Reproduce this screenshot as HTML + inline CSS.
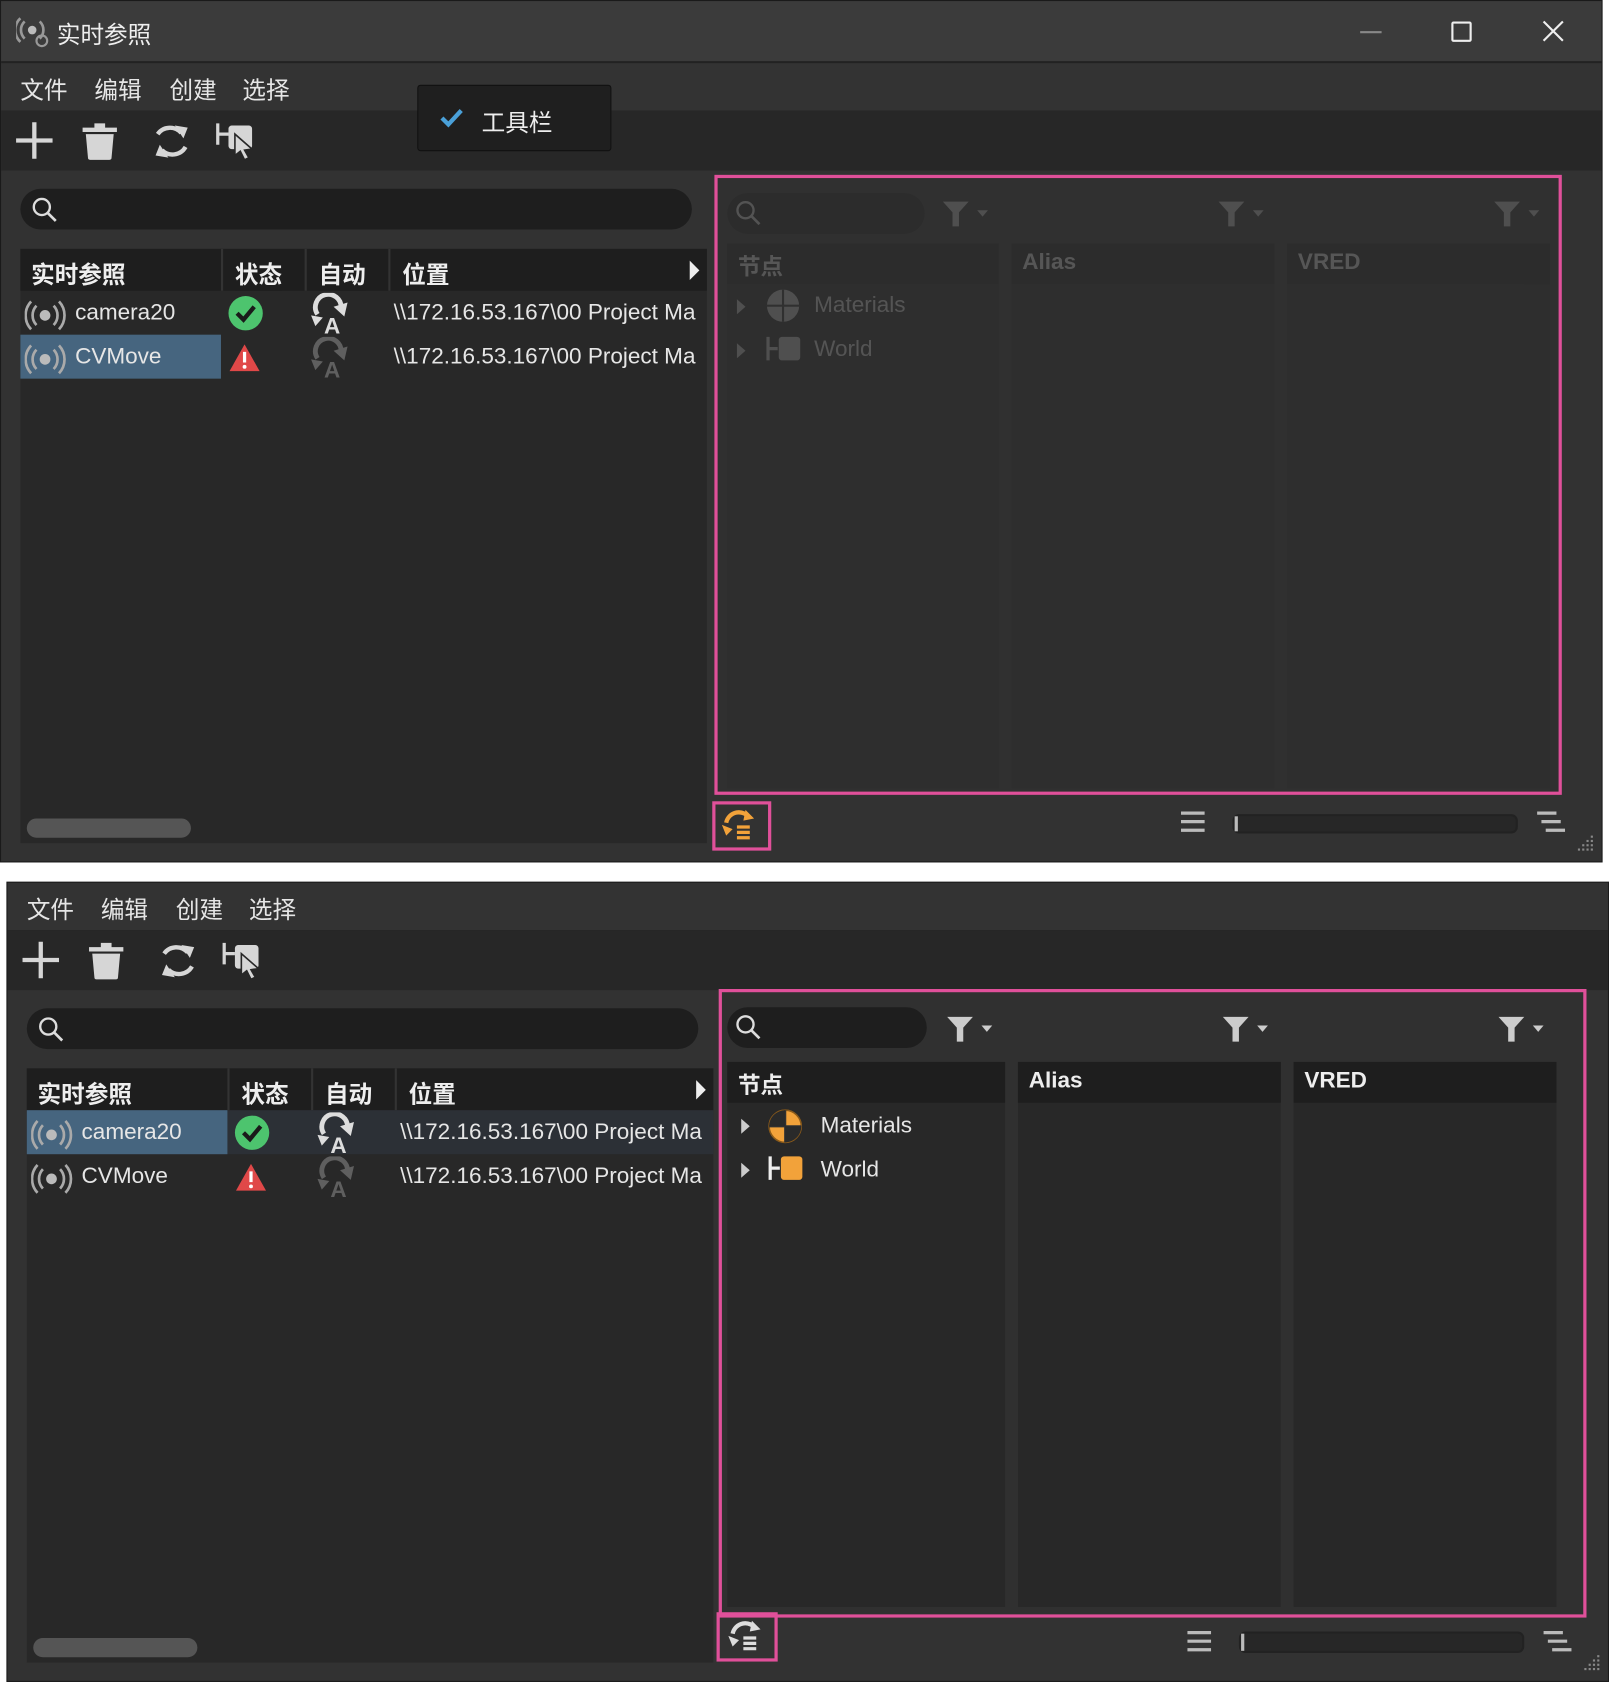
<!DOCTYPE html>
<html><head><meta charset="utf-8"><style>
*{box-sizing:border-box;margin:0;padding:0}
body{width:1609px;height:1684px;background:#fff;overflow:hidden;font-family:"Liberation Sans","Noto Sans CJK SC",sans-serif;color:#ddd}
#s{position:absolute;left:0;top:0;width:1500px;height:1570px;transform:scale(1.07267);transform-origin:0 0}
.a{position:absolute}
.win{position:absolute;background:#323232;border:1px solid #1a1a1a;overflow:hidden}
.menu{left:0;right:0;height:44px;background:#333;font-size:22px;color:#e6e6e6}
.menu span{position:absolute;top:8px}
.tb{left:0;right:0;height:56px;background:#272727}
.pill{background:#1e1e1e;border-radius:19px}
.tbl{background:#282828}
.hd{background:#1e1e1e;font-size:22px;font-weight:bold;color:#eee}
.row{font-size:21px;color:#e6e6e6}
.col{background:#282828}
.ch{background:#1e1e1e;font-size:21px;font-weight:bold;color:#eee;padding:6px 10px;height:38px}
.mag{border:3px solid #e0509a}
</style></head><body><div id="s">

<!-- TOP WINDOW -->
<div class="win" style="left:0;top:0;width:1494px;height:804px">
 <div class="a" style="left:0;top:0;right:0;height:58px;background:#3b3b3b;border-bottom:2px solid #222"></div>
 <svg class="a" style="left:14px;top:13px" width="34" height="32" viewBox="0 0 34 32"><circle cx="15" cy="14" r="4" fill="#bbb"/><path d="M8 6a11 11 0 0 0 0 16M22 6a11 11 0 0 1 0 16M4 3a15 15 0 0 0 0 22" stroke="#999" stroke-width="2.5" fill="none"/><circle cx="24" cy="24" r="5" stroke="#999" stroke-width="2" fill="none"/></svg>
 <div class="a" style="left:52px;top:14px;font-size:22px;color:#eee">实时参照</div>
 <div class="a" style="left:1267px;top:28px;width:20px;height:2px;background:#888"></div>
 <div class="a" style="left:1352px;top:19px;width:19px;height:19px;border:2px solid #eee;border-radius:2px"></div>
 <svg class="a" style="left:1436px;top:17px" width="22" height="22"><path d="M2 2L20 20M20 2L2 20" stroke="#eee" stroke-width="2"/></svg>
 <div class="a" style="top:58px;left:0;right:0;height:745px">
  <div class="a menu" style="top:0"><span style="left:18px">文件</span><span style="left:87px">编辑</span><span style="left:157px">创建</span><span style="left:225px">选择</span></div>
  <div class="a tb" style="top:44px"></div>
  <svg class="a" style="left:10px;top:52px" width="240" height="44" viewBox="0 0 240 44"><path d="M4 20H38M21 3V37" stroke="#d6d6d6" stroke-width="4"/><path d="M66 10H98" stroke="#d6d6d6" stroke-width="4"/><rect x="77" y="4" width="10" height="5" fill="#d6d6d6"/><path d="M69 14H95L93 36Q93 38 91 38H73Q71 38 71 36Z" fill="#d6d6d6"/><path d="M136 14A14 14 0 0 1 158 13M162 26A14 14 0 0 1 140 29" stroke="#d6d6d6" stroke-width="4" fill="none"/><path d="M152 6L164 8L160 18Z M146 36L134 34L138 24Z" fill="#d6d6d6"/><path d="M192 4V24M192 14H202" stroke="#d6d6d6" stroke-width="3"/><rect x="202" y="6" width="22" height="22" rx="3" fill="#d6d6d6"/><path d="M208 14L208 34L213 30L217 38L221 36L217 29L224 28Z" fill="#d6d6d6" stroke="#272727" stroke-width="1.5"/></svg>
  <div class="a pill" style="left:18px;top:117px;width:626px;height:38px"></div>
  <svg class="a" style="left:28px;top:124px" width="26" height="26"><circle cx="10" cy="10" r="7.5" stroke="#ddd" stroke-width="2.2" fill="none"/><path d="M15 15L23 23" stroke="#ddd" stroke-width="2.5"/></svg>
  <div class="a tbl" style="left:18px;top:173px;width:640px;height:554px"></div>
  <div class="a hd" style="left:18px;top:173px;width:640px;height:39px"></div>
  <div class="a" style="left:205px;top:173px;width:2px;height:39px;background:#333"></div>
  <div class="a" style="left:283px;top:173px;width:2px;height:39px;background:#333"></div>
  <div class="a" style="left:361px;top:173px;width:2px;height:39px;background:#333"></div>
  <div class="a hd" style="left:28px;top:180px">实时参照</div><div class="a hd" style="left:218px;top:180px">状态</div><div class="a hd" style="left:296px;top:180px">自动</div><div class="a hd" style="left:374px;top:180px">位置</div>
  <svg class="a" style="left:640px;top:183px" width="12" height="20"><path d="M2 1L11 10L2 19Z" fill="#eee"/></svg>
  <div class="a" style="left:18px;top:253px;width:187px;height:41px;background:#46657f"></div>
  <div class="a row" style="left:69px;top:221px">camera20</div><div class="a row" style="left:69px;top:262px">CVMove</div>
  <div class="a row" style="left:366px;top:221px;width:292px;overflow:hidden;white-space:nowrap">\\172.16.53.167\00 Project Ma</div>
  <div class="a row" style="left:366px;top:262px;width:292px;overflow:hidden;white-space:nowrap">\\172.16.53.167\00 Project Ma</div>
  <svg class="a" style="left:22px;top:219px" width="40" height="32"><circle cx="19" cy="16" r="5" fill="#bbb"/><path d="M11 7a13 13 0 0 0 0 18M27 7a13 13 0 0 1 0 18M6 3a19 19 0 0 0 0 26M32 3a19 19 0 0 1 0 26" stroke="#aaa" stroke-width="2.5" fill="none"/></svg>
  <svg class="a" style="left:22px;top:260px" width="40" height="32"><circle cx="19" cy="16" r="5" fill="#bbb"/><path d="M11 7a13 13 0 0 0 0 18M27 7a13 13 0 0 1 0 18M6 3a19 19 0 0 0 0 26M32 3a19 19 0 0 1 0 26" stroke="#aaa" stroke-width="2.5" fill="none"/></svg>
  <svg class="a" style="left:211px;top:216px" width="34" height="34"><circle cx="17" cy="17" r="16" fill="#4dc46e"/><path d="M9 17L15 23L25 11" stroke="#1a1a1a" stroke-width="4" fill="none"/></svg>
  <svg class="a" style="left:212px;top:260px" width="30" height="28"><path d="M15 2L29 27H1Z" fill="#e04848"/><path d="M15 9V19" stroke="#fff" stroke-width="3"/><circle cx="15" cy="23" r="1.8" fill="#fff"/></svg>
  <svg class="a" style="left:287px;top:214px" width="38" height="40"><path d="M8 20A12 12 0 1 1 30 14" stroke="#ddd" stroke-width="4.5" fill="none"/><path d="M23 13L36 9L33 22Z M2 21L13 23L6 31Z" fill="#ddd"/><text x="14" y="38" font-size="21" font-weight="bold" fill="#ddd" font-family="Liberation Sans">A</text></svg>
  <svg class="a" style="left:287px;top:255px;opacity:.3" width="38" height="40"><path d="M8 20A12 12 0 1 1 30 14" stroke="#ddd" stroke-width="4.5" fill="none"/><path d="M23 13L36 9L33 22Z M2 21L13 23L6 31Z" fill="#ddd"/><text x="14" y="38" font-size="21" font-weight="bold" fill="#ddd" font-family="Liberation Sans">A</text></svg>
  <div class="a" style="left:24px;top:704px;width:153px;height:18px;background:#555;border-radius:9px"></div>
  <!-- right panel -->
  <div class="a mag" style="left:665px;top:104px;width:790px;height:578px;background:#303030">
   <div class="a" style="left:0;top:0;right:0;bottom:0;opacity:.2">
    <div class="a pill" style="left:9px;top:14px;width:184px;height:38px"></div>
    <svg class="a" style="left:16px;top:20px" width="26" height="26"><circle cx="10" cy="10" r="7.5" stroke="#ddd" stroke-width="2.2" fill="none"/><path d="M15 15L23 23" stroke="#ddd" stroke-width="2.5"/></svg>
    <svg class="a" style="left:208px;top:20px" width="50" height="26"><path d="M2 2H26L17 12V25H11V12Z" fill="#ccc"/><path d="M34 10H44L39 16Z" fill="#ccc"/></svg>
    <svg class="a" style="left:465px;top:20px" width="50" height="26"><path d="M2 2H26L17 12V25H11V12Z" fill="#ccc"/><path d="M34 10H44L39 16Z" fill="#ccc"/></svg>
    <svg class="a" style="left:722px;top:20px" width="50" height="26"><path d="M2 2H26L17 12V25H11V12Z" fill="#ccc"/><path d="M34 10H44L39 16Z" fill="#ccc"/></svg>
    <div class="a col" style="left:9px;top:61px;width:253px;height:508px"><div class="ch">节点</div></div>
    <div class="a col" style="left:274px;top:61px;width:245px;height:508px"><div class="ch">Alias</div></div>
    <div class="a col" style="left:531px;top:61px;width:245px;height:508px"><div class="ch">VRED</div></div>
    <svg class="a" style="left:17px;top:112px" width="10" height="16"><path d="M1 1L9 8L1 15Z" fill="#ccc"/></svg>
    <svg class="a" style="left:17px;top:153px" width="10" height="16"><path d="M1 1L9 8L1 15Z" fill="#ccc"/></svg>
    <svg class="a" style="left:44px;top:102px" width="34" height="34"><circle cx="17" cy="17" r="15" fill="#ccc"/><path d="M17 2V32M2 17H32" stroke="#333" stroke-width="2"/></svg>
    <svg class="a" style="left:44px;top:146px" width="36" height="26"><path d="M3 2V24M3 13H12" stroke="#ccc" stroke-width="3"/><rect x="13" y="2" width="20" height="22" rx="3" fill="#ccc"/></svg>
    <div class="a row" style="left:90px;top:107px">Materials</div>
    <div class="a row" style="left:90px;top:148px">World</div>
   </div>
  </div>
  <div class="a mag" style="left:663px;top:688px;width:55px;height:46px"></div>
  <svg class="a" style="left:670px;top:692px" width="36" height="36"><path d="M6 16A12 12 0 0 1 28 12" stroke="#f2a23a" stroke-width="4" fill="none"/><path d="M24 4L32 12L22 14Z M2 18L12 22L6 28Z" fill="#f2a23a"/><path d="M16 20H28M16 25H28M16 30H28" stroke="#f2a23a" stroke-width="3"/></svg>
  <svg class="a" style="left:1098px;top:696px" width="26" height="22"><path d="M2 3H24M2 11H24M2 19H24" stroke="#bbb" stroke-width="3"/></svg>
  <div class="a" style="left:1148px;top:700px;width:266px;height:18px;background:#272727;border:2px solid #222;border-radius:6px"></div>
  <div class="a" style="left:1150px;top:702px;width:3px;height:14px;background:#bbb"></div>
  <svg class="a" style="left:1430px;top:696px" width="40" height="22"><path d="M2 3H20M6 11H24M10 19H28" stroke="#bbb" stroke-width="3"/></svg>
  <svg class="a" style="left:1466px;top:718px" width="22" height="22"><g fill="#888"><rect x="16" y="2" width="2" height="2"/><rect x="12" y="6" width="2" height="2"/><rect x="16" y="6" width="2" height="2"/><rect x="8" y="10" width="2" height="2"/><rect x="12" y="10" width="2" height="2"/><rect x="16" y="10" width="2" height="2"/><rect x="4" y="14" width="2" height="2"/><rect x="8" y="14" width="2" height="2"/><rect x="12" y="14" width="2" height="2"/><rect x="16" y="14" width="2" height="2"/></g></svg>
 </div>
 <!-- popup -->
 <div class="a" style="left:388px;top:78px;width:181px;height:62px;background:#1f1f1f;border:1px solid #111;border-radius:3px"></div>
 <svg class="a" style="left:408px;top:98px" width="24" height="22"><path d="M3 11L9 17L21 4" stroke="#4aa0d8" stroke-width="4" fill="none"/></svg>
 <div class="a" style="left:448px;top:96px;font-size:22px;color:#eee">工具栏</div>
</div>

<!-- BOTTOM WINDOW -->
<div class="win" style="left:6px;top:822px;width:1494px;height:746px">
  <div class="a menu" style="top:0"><span style="left:18px">文件</span><span style="left:87px">编辑</span><span style="left:157px">创建</span><span style="left:225px">选择</span></div>
  <div class="a tb" style="top:44px"></div>
  <svg class="a" style="left:10px;top:52px" width="240" height="44" viewBox="0 0 240 44"><path d="M4 20H38M21 3V37" stroke="#d6d6d6" stroke-width="4"/><path d="M66 10H98" stroke="#d6d6d6" stroke-width="4"/><rect x="77" y="4" width="10" height="5" fill="#d6d6d6"/><path d="M69 14H95L93 36Q93 38 91 38H73Q71 38 71 36Z" fill="#d6d6d6"/><path d="M136 14A14 14 0 0 1 158 13M162 26A14 14 0 0 1 140 29" stroke="#d6d6d6" stroke-width="4" fill="none"/><path d="M152 6L164 8L160 18Z M146 36L134 34L138 24Z" fill="#d6d6d6"/><path d="M192 4V24M192 14H202" stroke="#d6d6d6" stroke-width="3"/><rect x="202" y="6" width="22" height="22" rx="3" fill="#d6d6d6"/><path d="M208 14L208 34L213 30L217 38L221 36L217 29L224 28Z" fill="#d6d6d6" stroke="#272727" stroke-width="1.5"/></svg>
  <div class="a pill" style="left:18px;top:117px;width:626px;height:38px"></div>
  <svg class="a" style="left:28px;top:124px" width="26" height="26"><circle cx="10" cy="10" r="7.5" stroke="#ddd" stroke-width="2.2" fill="none"/><path d="M15 15L23 23" stroke="#ddd" stroke-width="2.5"/></svg>
  <div class="a tbl" style="left:18px;top:173px;width:640px;height:554px"></div>
  <div class="a hd" style="left:18px;top:173px;width:640px;height:39px"></div>
  <div class="a" style="left:205px;top:173px;width:2px;height:39px;background:#333"></div>
  <div class="a" style="left:283px;top:173px;width:2px;height:39px;background:#333"></div>
  <div class="a" style="left:361px;top:173px;width:2px;height:39px;background:#333"></div>
  <div class="a hd" style="left:28px;top:180px">实时参照</div><div class="a hd" style="left:218px;top:180px">状态</div><div class="a hd" style="left:296px;top:180px">自动</div><div class="a hd" style="left:374px;top:180px">位置</div>
  <svg class="a" style="left:640px;top:183px" width="12" height="20"><path d="M2 1L11 10L2 19Z" fill="#eee"/></svg>
  <div class="a" style="left:18px;top:212px;width:640px;height:41px;background:#2c3036"></div>
  <div class="a" style="left:18px;top:212px;width:187px;height:41px;background:#46657f"></div>
  <div class="a row" style="left:69px;top:221px">camera20</div><div class="a row" style="left:69px;top:262px">CVMove</div>
  <div class="a row" style="left:366px;top:221px;width:292px;overflow:hidden;white-space:nowrap">\\172.16.53.167\00 Project Ma</div>
  <div class="a row" style="left:366px;top:262px;width:292px;overflow:hidden;white-space:nowrap">\\172.16.53.167\00 Project Ma</div>
  <svg class="a" style="left:22px;top:219px" width="40" height="32"><circle cx="19" cy="16" r="5" fill="#bbb"/><path d="M11 7a13 13 0 0 0 0 18M27 7a13 13 0 0 1 0 18M6 3a19 19 0 0 0 0 26M32 3a19 19 0 0 1 0 26" stroke="#aaa" stroke-width="2.5" fill="none"/></svg>
  <svg class="a" style="left:22px;top:260px" width="40" height="32"><circle cx="19" cy="16" r="5" fill="#bbb"/><path d="M11 7a13 13 0 0 0 0 18M27 7a13 13 0 0 1 0 18M6 3a19 19 0 0 0 0 26M32 3a19 19 0 0 1 0 26" stroke="#aaa" stroke-width="2.5" fill="none"/></svg>
  <svg class="a" style="left:211px;top:216px" width="34" height="34"><circle cx="17" cy="17" r="16" fill="#4dc46e"/><path d="M9 17L15 23L25 11" stroke="#1a1a1a" stroke-width="4" fill="none"/></svg>
  <svg class="a" style="left:212px;top:260px" width="30" height="28"><path d="M15 2L29 27H1Z" fill="#e04848"/><path d="M15 9V19" stroke="#fff" stroke-width="3"/><circle cx="15" cy="23" r="1.8" fill="#fff"/></svg>
  <svg class="a" style="left:287px;top:214px" width="38" height="40"><path d="M8 20A12 12 0 1 1 30 14" stroke="#ddd" stroke-width="4.5" fill="none"/><path d="M23 13L36 9L33 22Z M2 21L13 23L6 31Z" fill="#ddd"/><text x="14" y="38" font-size="21" font-weight="bold" fill="#ddd" font-family="Liberation Sans">A</text></svg>
  <svg class="a" style="left:287px;top:255px;opacity:.3" width="38" height="40"><path d="M8 20A12 12 0 1 1 30 14" stroke="#ddd" stroke-width="4.5" fill="none"/><path d="M23 13L36 9L33 22Z M2 21L13 23L6 31Z" fill="#ddd"/><text x="14" y="38" font-size="21" font-weight="bold" fill="#ddd" font-family="Liberation Sans">A</text></svg>
  <div class="a" style="left:24px;top:704px;width:153px;height:18px;background:#555;border-radius:9px"></div>
  <div class="a mag" style="left:663px;top:99px;width:809px;height:586px;background:#303030">
    <div class="a pill" style="left:5px;top:14px;width:186px;height:38px"></div>
    <svg class="a" style="left:12px;top:20px" width="26" height="26"><circle cx="10" cy="10" r="7.5" stroke="#ddd" stroke-width="2.2" fill="none"/><path d="M15 15L23 23" stroke="#ddd" stroke-width="2.5"/></svg>
    <svg class="a" style="left:208px;top:21px" width="50" height="26"><path d="M2 2H26L17 12V25H11V12Z" fill="#ccc"/><path d="M34 10H44L39 16Z" fill="#ccc"/></svg>
    <svg class="a" style="left:465px;top:21px" width="50" height="26"><path d="M2 2H26L17 12V25H11V12Z" fill="#ccc"/><path d="M34 10H44L39 16Z" fill="#ccc"/></svg>
    <svg class="a" style="left:722px;top:21px" width="50" height="26"><path d="M2 2H26L17 12V25H11V12Z" fill="#ccc"/><path d="M34 10H44L39 16Z" fill="#ccc"/></svg>
    <div class="a col" style="left:5px;top:65px;width:259px;height:508px"><div class="ch">节点</div></div>
    <div class="a col" style="left:276px;top:65px;width:245px;height:508px"><div class="ch">Alias</div></div>
    <div class="a col" style="left:533px;top:65px;width:245px;height:508px"><div class="ch">VRED</div></div>
    <svg class="a" style="left:17px;top:117px" width="10" height="16"><path d="M1 1L9 8L1 15Z" fill="#ccc"/></svg>
    <svg class="a" style="left:17px;top:158px" width="10" height="16"><path d="M1 1L9 8L1 15Z" fill="#ccc"/></svg>
    <svg class="a" style="left:42px;top:108px" width="34" height="34"><circle cx="17" cy="17" r="15" fill="#f2a23a" stroke="#8a5a1a" stroke-width="1.5"/><path d="M17 2V32M2 17H32" stroke="#333" stroke-width="2"/><path d="M17 2A15 15 0 0 0 2 17H17Z M17 17H32A15 15 0 0 1 17 32Z" fill="#2a2a2a"/></svg>
    <svg class="a" style="left:42px;top:151px" width="36" height="26"><path d="M3 2V24M3 13H12" stroke="#eee" stroke-width="3"/><rect x="13" y="2" width="20" height="22" rx="3" fill="#f2a23a"/></svg>
    <div class="a row" style="left:92px;top:113px">Materials</div>
    <div class="a row" style="left:92px;top:154px">World</div>
  </div>
  <div class="a mag" style="left:661px;top:680px;width:57px;height:46px"></div>
  <svg class="a" style="left:670px;top:684px" width="36" height="36"><path d="M6 16A12 12 0 0 1 28 12" stroke="#ddd" stroke-width="4" fill="none"/><path d="M24 4L32 12L22 14Z M2 18L12 22L6 28Z" fill="#ddd"/><path d="M16 20H28M16 25H28M16 30H28" stroke="#ddd" stroke-width="3"/></svg>
  <svg class="a" style="left:1098px;top:696px" width="26" height="22"><path d="M2 3H24M2 11H24M2 19H24" stroke="#bbb" stroke-width="3"/></svg>
  <div class="a" style="left:1148px;top:698px;width:266px;height:20px;background:#272727;border:2px solid #222;border-radius:6px"></div>
  <div class="a" style="left:1150px;top:700px;width:3px;height:16px;background:#bbb"></div>
  <svg class="a" style="left:1430px;top:696px" width="40" height="22"><path d="M2 3H20M6 11H24M10 19H28" stroke="#bbb" stroke-width="3"/></svg>
  <svg class="a" style="left:1466px;top:718px" width="22" height="22"><g fill="#888"><rect x="16" y="2" width="2" height="2"/><rect x="12" y="6" width="2" height="2"/><rect x="16" y="6" width="2" height="2"/><rect x="8" y="10" width="2" height="2"/><rect x="12" y="10" width="2" height="2"/><rect x="16" y="10" width="2" height="2"/><rect x="4" y="14" width="2" height="2"/><rect x="8" y="14" width="2" height="2"/><rect x="12" y="14" width="2" height="2"/><rect x="16" y="14" width="2" height="2"/></g></svg>
</div>
</div></body></html>
